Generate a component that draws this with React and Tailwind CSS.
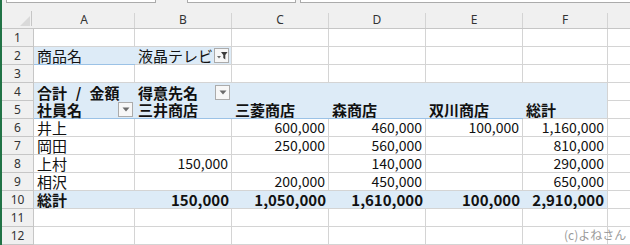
import React from "react";

const COLS = "grid-cols-[32px_101px_97px_97px_97px_97px_85px_1fr]";
const JP = { fontFamily: '"Noto Sans CJK JP", "Noto Sans", sans-serif' };

function Dropdown({ filter }) {
  return (
    <span className="mb-[1px] mr-[2px] flex h-[15px] w-[15px] shrink-0 items-center justify-center border border-[#ababab] bg-[#f7f7f7]">
      {filter ? (
        <svg width="12" height="9" viewBox="0 0 12 9">
          <path d="M1 5h4l-2 2.5z" fill="#6b6b6b" />
          <path d="M5 1h6.5L9.3 4v4.5L7.3 7V4z" fill="#3c3c3c" />
        </svg>
      ) : (
        <svg width="8" height="5" viewBox="0 0 8 5">
          <path d="M0.5 0.5h7L4 4.5z" fill="#6b6b6b" />
        </svg>
      )}
    </span>
  );
}

// c: text, r: right aligned, b: bold, blue: filled, nv: no vertical line, bb: blue bottom, dd: dropdown
const e = {};
const rows = [
  [e, e, e, e, e, e],
  [
    { c: "商品名", blue: 1, nv: 1, bb: 1 },
    { c: "液晶テレビ", blue: 1, bb: 1, dd: "filter" },
    e, e, e, e,
  ],
  [e, e, e, e, e, e],
  [
    { c: "合計 / 金額", b: 1, blue: 1, nv: 1, nb: 1, ws: 1 },
    { c: "得意先名", b: 1, blue: 1, nv: 1, nb: 1, dd: "drop" },
    { blue: 1, nv: 1, nb: 1 },
    { blue: 1, nv: 1, nb: 1 },
    { blue: 1, nv: 1, nb: 1 },
    { blue: 1, nb: 1 },
  ],
  [
    { c: "社員名", b: 1, blue: 1, nv: 1, bb: 1, dd: "drop" },
    { c: "三井商店", b: 1, blue: 1, nv: 1, bb: 1 },
    { c: "三菱商店", b: 1, blue: 1, nv: 1, bb: 1 },
    { c: "森商店", b: 1, blue: 1, nv: 1, bb: 1 },
    { c: "双川商店", b: 1, blue: 1, nv: 1, bb: 1 },
    { c: "総計", b: 1, blue: 1, bb: 1 },
  ],
  [{ c: "井上" }, e, { c: "600,000", r: 1 }, { c: "460,000", r: 1 }, { c: "100,000", r: 1 }, { c: "1,160,000", r: 1 }],
  [{ c: "岡田" }, e, { c: "250,000", r: 1 }, { c: "560,000", r: 1 }, e, { c: "810,000", r: 1 }],
  [{ c: "上村" }, { c: "150,000", r: 1 }, e, { c: "140,000", r: 1 }, e, { c: "290,000", r: 1 }],
  [
    { c: "相沢", bb: 1 },
    { bb: 1 },
    { c: "200,000", r: 1, bb: 1 },
    { c: "450,000", r: 1, bb: 1 },
    { bb: 1 },
    { c: "650,000", r: 1, bb: 1 },
  ],
  [
    { c: "総計", b: 1, blue: 1, nv: 1 },
    { c: "150,000", r: 1, b: 1, blue: 1, nv: 1 },
    { c: "1,050,000", r: 1, b: 1, blue: 1, nv: 1 },
    { c: "1,610,000", r: 1, b: 1, blue: 1, nv: 1 },
    { c: "100,000", r: 1, b: 1, blue: 1, nv: 1 },
    { c: "2,910,000", r: 1, b: 1, blue: 1 },
  ],
  [e, e, e, e, e, e],
  [e, e, e, e, e, e],
];

function Cell({ cell }) {
  const num = cell.r;
  return (
    <div
      className={`flex h-[18px] items-end overflow-visible whitespace-nowrap ${
        cell.blue ? "bg-[#ddebf7]" : "bg-white"
      } ${cell.nv ? "" : "border-r border-[#d4d4d4]"} ${
        cell.nb ? "" : cell.bb ? "border-b border-[#9bc2e6]" : "border-b border-[#d4d4d4]"
      }`}
    >
      <span
        className={`flex-1 leading-[17px] text-[#111] ${num ? "pr-[3px] text-right" : "pl-[3px]"} ${
          cell.b ? "font-bold" : ""
        } ${num && !cell.b ? "text-[14px]" : "text-[15px]"} ${cell.ws ? "[word-spacing:5px]" : ""}`}
        style={JP}
      >
        {cell.c}
      </span>
      {cell.dd && <Dropdown filter={cell.dd === "filter"} />}
    </div>
  );
}

export default function App() {
  const letters = ["A", "B", "C", "D", "E", "F", ""];
  return (
    <div className="relative flex h-[245px] w-[630px] overflow-hidden bg-white">
      <div className="w-[2px] shrink-0 bg-[#217346]" />
      <div className="flex min-w-0 flex-1 flex-col">
        <div className="flex h-[11px] items-start bg-[#f0f0f0]">
          <div className="ml-[4px] h-[3px] w-[150px] border-x border-b border-[#ababab] bg-white" />
          <div className="ml-[31px] h-[3px] w-[109px] border-x border-b border-[#ababab] bg-white" />
          <div className="ml-[4px] h-[3px] flex-1 border-l border-b border-[#ababab] bg-white" />
        </div>
        <div className={`grid h-[18px] ${COLS} border-b border-[#c6c6c6] bg-[#f0f0f0]`}>
          <div className="flex items-end justify-end pr-[2px] pb-[2px]">
            <svg width="10" height="10" viewBox="0 0 10 10">
              <path d="M10 0V10H0z" fill="#d9d9d9" />
            </svg>
            <span className="ml-[1px] h-[15px] w-px bg-[#c6c6c6]" />
          </div>
          {letters.map((l, i) => (
            <div key={i} className="flex items-end">
              <span
                className="flex-1 text-center text-[12px] leading-[17px] text-[#333]"
                style={{ fontFamily: '"Noto Sans", "Liberation Sans", sans-serif' }}
              >
                {l}
              </span>
              {i < 6 && <span className="h-[15px] w-px bg-[#d4d4d4]" />}
            </div>
          ))}
        </div>
        {rows.map((row, ri) => (
          <div key={ri} className={`grid ${COLS}`}>
            <div className="flex h-[18px] items-end justify-center border-r border-b border-[#c6c6c6] bg-[#f0f0f0]">
              <span
                className="text-[12px] leading-[16px] text-[#333]"
                style={{ fontFamily: '"Noto Sans", "Liberation Sans", sans-serif' }}
              >
                {ri + 1}
              </span>
            </div>
            {row.map((cell, ci) => (
              <Cell key={ci} cell={cell} />
            ))}
            <div className="h-[18px] border-b border-[#d4d4d4] bg-white" />
          </div>
        ))}
      </div>
      <span
        className="absolute left-[564px] top-[228px] whitespace-nowrap text-[12px] leading-[14px] text-[#9a9a9a]"
        style={JP}
      >
        (c)よねさん
      </span>
    </div>
  );
}
